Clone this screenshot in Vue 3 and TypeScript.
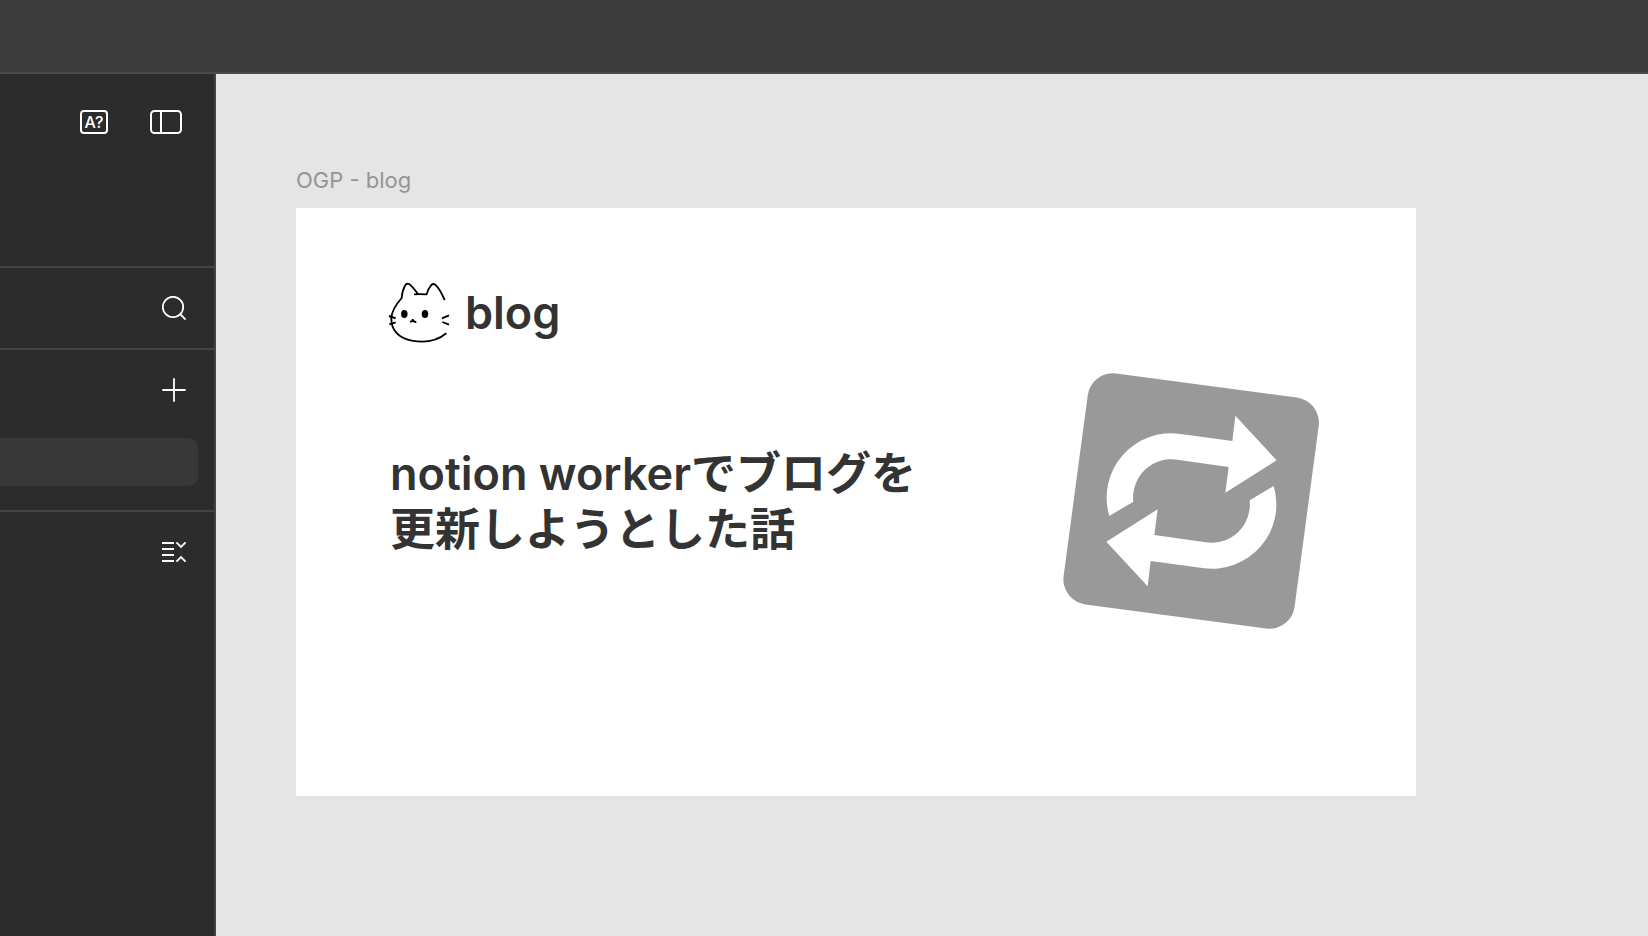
<script setup lang="ts">
const title: { latin: string; rest: string; second: string } = {
  latin: 'notion worker',
  rest: 'でブログを',
  second: '更新しようとした話',
}
</script>

<template>
  <div class="app">
    <header class="topbar"></header>
    <div class="workspace">
      <aside class="sidebar">
        <div class="tools">
          <button class="tool" type="button"><span class="missing-fonts">A?</span></button>
          <button class="tool" type="button" aria-label="Toggle sidebar">
            <svg width="32" height="24" viewBox="0 0 32 24" fill="none" stroke="currentColor" stroke-width="2">
              <rect x="1" y="1" width="30" height="22" rx="3.5" />
              <path d="M11 1v22" />
            </svg>
          </button>
        </div>
        <div class="row">
          <button class="tool" type="button" aria-label="Search">
            <svg width="24" height="24" viewBox="0 0 24 24" fill="none" stroke="currentColor" stroke-width="1.8">
              <circle cx="11" cy="11" r="10.2" />
              <path d="M18 18l5.6 5.6" />
            </svg>
          </button>
        </div>
        <div class="pages">
          <div class="row">
            <button class="tool" type="button" aria-label="Add page">
              <svg width="24" height="24" viewBox="0 0 24 24" fill="none" stroke="currentColor" stroke-width="1.8">
                <path d="M12 0.3v23.4M0.3 12h23.4" />
              </svg>
            </button>
          </div>
          <div class="current-page"></div>
        </div>
        <div class="row">
          <button class="tool" type="button" aria-label="Collapse layers">
            <svg width="24" height="24" viewBox="0 0 24 24" fill="none" stroke="currentColor" stroke-width="1.9">
              <path d="M0 3h12M0 9h12M0 15h12M0 21h12M14.4 2.4l4.6 4.6 4.6-4.6M14.4 21.6l4.6-4.6 4.6 4.6" />
            </svg>
          </button>
        </div>
      </aside>

      <main class="canvas">
        <div class="frame-label">OGP - blog</div>
        <article class="frame">
          <div class="copy">
            <div class="logo">
              <svg class="cat" viewBox="51 33 192 192" fill="none" stroke="#000" stroke-width="5.6" stroke-linejoin="round">
                <path d="M224 90C216 72 204 51 196 44Q190 39 184 45C178 52 172 64 170 73Q151 72 132 73M144 72C135 60 124 46 117 42Q110 38 104 49C98 60 96 72 95 84C78 103 65 124 64 145C63 178 84 204 125 212C168 220 205 210 229 190" />
                <path d="M57 138l20 7M58 163l19-6M216 145l21-9M217 156l20 8M120 155q8 0 9-5q4 7 10 6M128 147v4" />
                <ellipse cx="103" cy="132" rx="7" ry="9" fill="#000" />
                <ellipse cx="165" cy="132" rx="7" ry="9" fill="#000" />
              </svg>
              <span class="brand">blog</span>
            </div>
            <h1 class="title"><span class="latin">{{ title.latin }}</span>{{ title.rest }}<br />{{ title.second }}</h1>
          </div>
          <svg class="repeat" viewBox="0 0 900 900" role="img" aria-label="Repeat">
            <rect x="104" y="103.5" width="699" height="699" rx="76" fill="#999" transform="rotate(7.6 453.5 453)" />
            <g fill="#fff">
              <path d="M208 498A193 193 0 0 1 422 252L577 273L586 197L710 331L556 428L566 351L412 329A115 115 0 0 0 280 455Z" />
              <path transform="rotate(180 454.5 453)" d="M208 498A193 193 0 0 1 422 252L577 273L586 197L710 331L556 428L566 351L412 329A115 115 0 0 0 280 455Z" />
            </g>
          </svg>
        </article>
      </main>
    </div>
  </div>
</template>

<style>
body {
  margin: 0;
}
</style>

<style scoped>
.app {
  display: flex;
  flex-direction: column;
  min-height: 100vh;
  font-family: Inter, "Noto Sans CJK JP", sans-serif;
}
.topbar {
  height: 72px;
  background: #3b3b3b;
  border-bottom: 2px solid #4a4a4a;
}
.workspace {
  display: flex;
  flex: 1;
}
.sidebar {
  flex: 0 0 214px;
  background: #2c2c2c;
  border-right: 2px solid #444;
  color: #fff;
}
.tools {
  display: flex;
  justify-content: flex-end;
  gap: 24px;
  height: 168px;
  padding: 24px 24px 0 0;
  border-bottom: 2px solid #444;
}
.tool {
  display: flex;
  align-items: center;
  justify-content: center;
  width: 48px;
  height: 48px;
  padding: 0;
  border: 0;
  background: none;
  color: inherit;
  font: inherit;
}
.missing-fonts {
  display: flex;
  align-items: center;
  justify-content: center;
  box-sizing: border-box;
  width: 28px;
  height: 24px;
  border: 2px solid #fff;
  border-radius: 4px;
  font-size: 16px;
  font-weight: 500;
  line-height: 20px;
}
.row {
  display: flex;
  align-items: center;
  justify-content: flex-end;
  height: 80px;
  padding-right: 16px;
}
.tools + .row,
.pages {
  border-bottom: 2px solid #444;
}
.pages {
  padding-bottom: 24px;
}
.current-page {
  height: 48px;
  margin: 8px 16px 0 0;
  border-radius: 0 10px 10px 0;
  background: #383838;
}
.canvas {
  flex: 1;
  padding: 90px 232px 0 80px;
  background: #e5e5e5;
}
.frame-label {
  margin-bottom: 12px;
  color: #949494;
  font-size: 22px;
  line-height: 32px;
}
.frame {
  display: flex;
  justify-content: space-between;
  box-sizing: border-box;
  aspect-ratio: 40 / 21;
  padding: 73px 76px 0 91px;
  background: #fff;
  color: #333;
}
.logo {
  display: flex;
  align-items: center;
  gap: 14px;
}
.cat {
  width: 64px;
  height: 64px;
}
.brand {
  font-size: 45px;
  font-weight: 600;
  line-height: 64px;
}
.title {
  margin: 98px 0 0 3px;
  font-family: "Noto Sans CJK JP", sans-serif;
  font-size: 45px;
  font-weight: 700;
  line-height: 56px;
  white-space: nowrap;
}
.latin {
  font-family: Inter, sans-serif;
  font-weight: 600;
  line-height: 1;
}
.repeat {
  width: 300px;
  height: 300px;
  margin-top: 69px;
}
</style>
